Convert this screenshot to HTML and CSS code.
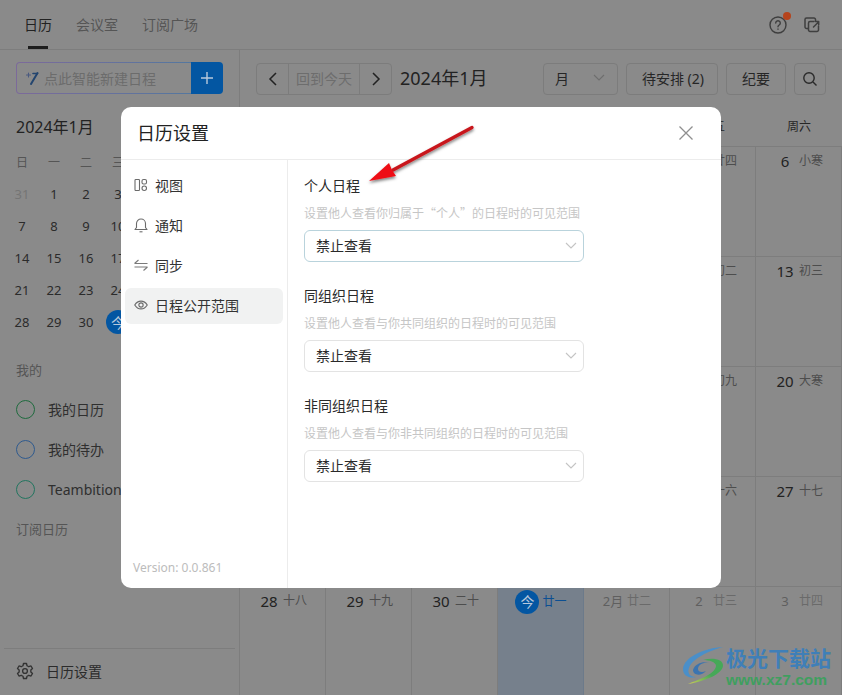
FILE: index.html
```html
<!DOCTYPE html>
<html lang="zh-CN">
<head>
  <meta charset="UTF-8" />
  <title>日历设置</title>
  <link rel="stylesheet" href="styles.css">
</head>
<body>
  <header class="topbar">
    <nav class="tabs">
      <a class="tab active">日历</a>
      <a class="tab">会议室</a>
      <a class="tab">订阅广场</a>
    </nav>
    <div class="top-icons">
      <span class="help">
        <svg width="20" height="20" viewBox="0 0 20 20" fill="none" stroke="#3f3f3f" stroke-width="1.4"><circle cx="10" cy="10" r="8"/><path d="M7.7 8a2.3 2.3 0 1 1 3.5 2c-.8.5-1.2.9-1.2 1.8" stroke-linecap="round"/><path d="M10 13.6v1.2"/></svg>
        <i class="dot"></i>
      </span>
      <svg width="18" height="18" viewBox="0 0 18 18" fill="none" stroke="#3f3f3f" stroke-width="1.5" stroke-linejoin="round" stroke-linecap="round"><path d="M5 12.500H3.500A1.500 1.500 0 0 1 2 11V3.500A1.500 1.500 0 0 1 3.500 2H11a1.500 1.500 0 0 1 1.500 1.500V5"/><path d="M11 5.500H7a1.500 1.500 0 0 0-1.500 1.500v7A1.500 1.500 0 0 0 7 15.500h7a1.500 1.500 0 0 0 1.500-1.500v-4"/><path d="M10.500 11l5-5M12.500 5.500h3.200v3.200"/></svg>
    </div>
  </header>

  <div class="app">
    <aside class="sidebar">
      <div class="quick-add">
        <div class="quick-input">
          <svg width="14" height="16" viewBox="0 0 14 16" fill="none" stroke-linecap="round"><path d="M12.5 3L6 14" stroke="#23456f" stroke-width="2"/><path d="M8 3.5h4.5" stroke="#23456f" stroke-width="1.6"/><path d="M1.5 5h4M3.5 3v4" stroke="#4a5a80" stroke-width="1.1"/></svg>
          <span>点此智能新建日程</span>
        </div>
        <button class="quick-btn">
          <svg width="12" height="12" viewBox="0 0 12 12" stroke="#b9c9dc" stroke-width="1.4"><path d="M6 0v12M0 6h12"/></svg>
        </button>
      </div>

      <h2 class="mini-title">2024年1月</h2>
      <!-- only the columns the dialog leaves uncovered -->
      <div class="mini-cal">
        <span class="wk">日</span><span class="wk">一</span><span class="wk">二</span><span class="wk">三</span>
        <span class="off">31</span><span>1</span><span>2</span><span>3</span>
        <span>7</span><span>8</span><span>9</span><span>10</span>
        <span>14</span><span>15</span><span>16</span><span>17</span>
        <span>21</span><span>22</span><span>23</span><span>24</span>
        <span>28</span><span>29</span><span>30</span><span><b class="today-dot">今</b></span>
      </div>

      <div class="group-label mine">我的</div>
      <ul class="cal-list">
        <li><i class="ring green"></i>我的日历</li>
        <li><i class="ring blue"></i>我的待办</li>
        <li><i class="ring teal"></i>Teambition</li>
      </ul>
      <div class="group-label">订阅日历</div>

      <div class="side-foot">
        <svg width="18" height="18" viewBox="0 0 24 24" fill="none" stroke="#333" stroke-width="1.8" stroke-linejoin="round"><circle cx="12" cy="12" r="3.2"/><path d="M10 2h4l.7 3 2.4 1.3 2.9-1 2 3.4-2.2 2.1v2.4l2.2 2.1-2 3.4-2.9-1-2.4 1.3-.7 3h-4l-.7-3-2.4-1.3-2.9 1-2-3.4 2.2-2.1v-2.4L2 8.700l2-3.400 2.900 1L9.300 5z"/></svg>
        <span>日历设置</span>
      </div>
    </aside>

    <main class="main">
      <div class="toolbar">
        <div class="pager">
          <button class="pager-btn">
            <svg width="10" height="14" viewBox="0 0 10 14" fill="none" stroke="#222" stroke-width="1.5"><path d="M8 1L2 7l6 6"/></svg>
          </button>
          <button class="pager-today">回到今天</button>
          <button class="pager-btn">
            <svg width="10" height="14" viewBox="0 0 10 14" fill="none" stroke="#222" stroke-width="1.5"><path d="M2 1l6 6-6 6"/></svg>
          </button>
        </div>
        <div class="month-title">2024年1月</div>
        <div class="tools">
          <div class="tool view-select">月
            <svg width="12" height="7" viewBox="0 0 12 7" fill="none" stroke="#6e6e6e" stroke-width="1.100"><path d="M1 1l5 5 5-5"/></svg>
          </div>
          <div class="tool pending">待安排 (2)</div>
          <div class="tool notes">纪要</div>
          <div class="tool search">
            <svg width="16" height="16" viewBox="0 0 16 16" fill="none" stroke="#2a2a2a" stroke-width="1.400"><circle cx="7" cy="7" r="5.200"/><path d="M11 11l3.500 3.500"/></svg>
          </div>
        </div>
      </div>

      <div class="week-head">
        <span>周日</span><span>周一</span><span>周二</span><span>周三</span><span>周四</span><span>周五</span><span>周六</span>
      </div>

      <div class="month-grid">
        <div class="cell off"><b>31</b><em>十九</em></div><div class="cell"><b>1</b><em>二十</em></div><div class="cell"><b>2</b><em>廿一</em></div><div class="cell"><b>3</b><em>廿二</em></div><div class="cell"><b>4</b><em>廿三</em></div><div class="cell"><b>5</b><em>廿四</em></div><div class="cell"><b>6</b><em>小寒</em></div>
        <div class="cell"><b>7</b><em>廿六</em></div><div class="cell"><b>8</b><em>廿七</em></div><div class="cell"><b>9</b><em>廿八</em></div><div class="cell"><b>10</b><em>廿九</em></div><div class="cell"><b>11</b><em>初一</em></div><div class="cell"><b>12</b><em>初二</em></div><div class="cell"><b>13</b><em>初三</em></div>
        <div class="cell"><b>14</b><em>初四</em></div><div class="cell"><b>15</b><em>初五</em></div><div class="cell"><b>16</b><em>初六</em></div><div class="cell"><b>17</b><em>初七</em></div><div class="cell"><b>18</b><em>初八</em></div><div class="cell"><b>19</b><em>初九</em></div><div class="cell"><b>20</b><em>大寒</em></div>
        <div class="cell"><b>21</b><em>十一</em></div><div class="cell"><b>22</b><em>十二</em></div><div class="cell"><b>23</b><em>十三</em></div><div class="cell"><b>24</b><em>十四</em></div><div class="cell"><b>25</b><em>十五</em></div><div class="cell"><b>26</b><em>十六</em></div><div class="cell"><b>27</b><em>十七</em></div>
        <div class="cell"><b>28</b><em>十八</em></div><div class="cell"><b>29</b><em>十九</em></div><div class="cell"><b>30</b><em>二十</em></div><div class="cell today"><b class="today-dot">今</b><em>廿一</em></div><div class="cell off"><b>2月</b><em>廿二</em></div><div class="cell off"><b>2</b><em>廿三</em></div><div class="cell off"><b>3</b><em>廿四</em></div>
      </div>
    </main>
  </div>

  <section class="modal">
    <div class="modal-head">
      <h1>日历设置</h1>
      <svg width="16" height="16" viewBox="0 0 16 16" stroke="#8f8f8f" stroke-width="1.300"><path d="M1.500 1.500l13 13M14.500 1.500l-13 13"/></svg>
    </div>
    <div class="modal-body">
      <div class="modal-nav">
        <a class="nav-item">
          <svg width="14" height="14" viewBox="0 0 14 14" fill="none" stroke="#6b6b6b" stroke-width="1.100"><rect x="1" y="1.500" width="4.500" height="11" rx=".8"/><rect x="8" y="1.500" width="4.500" height="4.500" rx="1.500"/><rect x="8" y="8" width="4.500" height="4.500" rx="2.200"/></svg>
          视图
        </a>
        <a class="nav-item">
          <svg width="14" height="16" viewBox="0 0 14 16" fill="none" stroke="#6b6b6b" stroke-width="1.100"><path d="M1 12.500h12l-1.500-2V6.500a4.500 4.500 0 0 0-9 0v4z" stroke-linejoin="round"/><path d="M5.500 14.800h3"/></svg>
          通知
        </a>
        <a class="nav-item">
          <svg width="14" height="14" viewBox="0 0 14 14" fill="none" stroke="#7a7a7a" stroke-width="1.100"><path d="M.5 5.500h13M.5 5.500l4-3.500M13.500 9h-13M13.500 9l-4 3.500"/></svg>
          同步
        </a>
        <a class="nav-item active">
          <svg width="14" height="14" viewBox="0 0 15 14" fill="none" stroke="#6b6b6b" stroke-width="1.200"><path d="M.8 7c1.700-2.800 4-4.200 6.700-4.200S12.500 4.200 14.200 7c-1.700 2.800-4 4.200-6.700 4.200S2.500 9.800.8 7z"/><circle cx="7.500" cy="7" r="2.300"/></svg>
          日程公开范围
        </a>
        <div class="version">Version: 0.0.861</div>
      </div>
      <div class="modal-form">
        <div class="field">
          <h3>个人日程</h3>
          <p>设置他人查看你归属于“个人”的日程时的可见范围</p>
          <div class="select focused">禁止查看
            <svg width="12" height="7" viewBox="0 0 12 7" fill="none" stroke="#c4c4c4" stroke-width="1.100"><path d="M1 1l5 5 5-5"/></svg>
          </div>
        </div>
        <div class="field">
          <h3>同组织日程</h3>
          <p>设置他人查看与你共同组织的日程时的可见范围</p>
          <div class="select">禁止查看
            <svg width="12" height="7" viewBox="0 0 12 7" fill="none" stroke="#c4c4c4" stroke-width="1.100"><path d="M1 1l5 5 5-5"/></svg>
          </div>
        </div>
        <div class="field">
          <h3>非同组织日程</h3>
          <p>设置他人查看与你非共同组织的日程时的可见范围</p>
          <div class="select">禁止查看
            <svg width="12" height="7" viewBox="0 0 12 7" fill="none" stroke="#c4c4c4" stroke-width="1.100"><path d="M1 1l5 5 5-5"/></svg>
          </div>
        </div>
      </div>
    </div>
  </section>

  <!-- annotation arrow on top of the dialog -->
  <svg class="arrow" width="120" height="70" viewBox="0 0 120 70">
    <defs>
      <filter id="arrow-shadow" x="-20%" y="-20%" width="140%" height="150%"><feDropShadow dx="0" dy="2" stdDeviation="1.500" flood-color="#000" flood-opacity=".5"/></filter>
    </defs>
    <g filter="url(#arrow-shadow)">
      <path d="M112 7.500L33 50" stroke="#c8171c" stroke-width="3.400" stroke-linecap="round"/>
      <path d="M9 61L29 43 32 50 36 56z" fill="#ee0f14"/>
    </g>
  </svg>

  <div class="watermark">
    <svg width="44" height="40" viewBox="0 0 44 40" fill="none">
      <defs>
        <linearGradient id="wm-green" x1="1" y1="0" x2="0" y2="1"><stop offset=".5" stop-color="#46a858"/><stop offset="1" stop-color="#cfcf55"/></linearGradient>
      </defs>
      <path d="M41 1C22 2 2 11 1 23c0 7 7 10 13 8-6 0-9-4-7-9C10 13 26 5 41 1z" fill="#4a8fc9"/>
      <path d="M11 24c2-7 11-9 16-7-6-1-11 2-11 6 0 3 4 4 8 2-4 5-13 5-13-1z" fill="#3b74b0"/>
      <path d="M21 14c9-3 21-1 20 6-1 8-17 15-35 18 12-5 27-10 28-18 0-4-7-6-13-6z" fill="url(#wm-green)"/>
    </svg>
    <div class="wm-text">
      <strong>极光下载站</strong>
      <span>www.xz7.com</span>
    </div>
  </div>
</body>
</html>
```

FILE: styles.css
```css
* { box-sizing: border-box; }
html, body { height: 100%; }
body { margin: 0; height: 695px; overflow: hidden; position: relative; background: #8a8a8a; color: #222; font-family: "Noto Sans", "Noto Sans CJK SC", sans-serif; font-size: 14px; }
h1, h2, h3, p, ul { margin: 0; padding: 0; font-weight: 400; }
button { font: inherit; padding: 0; background: none; border: none; }
em, i { font-style: normal; }

/* top bar */
.topbar { height: 50px; display: flex; justify-content: space-between; border-bottom: 1px solid #7d7d7d; padding: 0 21px 0 24px; }
.tabs { display: flex; gap: 24px; }
.tab { position: relative; line-height: 49px; color: #555; font-size: 14px; }
.tab.active { color: #222; }
.tab.active::after { content: ""; position: absolute; left: 4px; right: 4px; bottom: 0; height: 3px; background: #1d1d1d; }
.top-icons { display: flex; align-items: center; gap: 15px; }
.help { position: relative; display: flex; }
.dot { position: absolute; top: -3px; right: -3px; width: 8px; height: 8px; border-radius: 50%; background: #b5431c; }

.app { display: flex; height: 645px; }

/* sidebar */
.sidebar { width: 240px; border-right: 1px solid #7d7d7d; display: flex; flex-direction: column; padding-top: 12px; }
.quick-add { display: flex; height: 32px; margin: 0 16px; width: 207px; }
.quick-input { flex: 1; display: flex; align-items: center; gap: 5px; padding-left: 8px; border: 1px solid transparent; border-right: none; border-radius: 4px 0 0 4px; background: linear-gradient(#8a8a8a, #8a8a8a) padding-box, linear-gradient(90deg, #7c6a9a, #54779f) border-box; color: #6c6c6c; font-size: 14px; }
.quick-btn { width: 32px; display: flex; align-items: center; justify-content: center; background: #0356a2; border-radius: 0 4px 4px 0; }
.mini-title { margin: 22px 0 0 16px; font-size: 16px; line-height: 22px; color: #222; }
.mini-cal { display: grid; grid-template-columns: repeat(4, 32px); grid-auto-rows: 32px; margin: 8px 0 0 6px; font-size: 13px; color: #2b2b2b; }
.mini-cal span { display: flex; align-items: center; justify-content: center; }
.mini-cal .wk { color: #555; font-size: 12px; }
.mini-cal .off { color: #757575; }
.today-dot { display: flex; align-items: center; justify-content: center; width: 24px; height: 24px; border-radius: 50%; background: #0356a2; color: #b9c9dc; font-weight: 400; font-size: 14px; }
.group-label { margin-left: 16px; font-size: 13px; line-height: 20px; color: #555; }
.group-label.mine { margin-top: 22px; }
.cal-list { list-style: none; margin: 9px 0 10px 16px; }
.cal-list li { display: flex; align-items: center; gap: 13px; height: 40px; color: #2f2f2f; white-space: nowrap; }
.ring { width: 19px; height: 19px; border-radius: 50%; border: 1.500px solid; }
.ring.green { border-color: #1f6b3e; }
.ring.blue { border-color: #2f5a8e; }
.ring.teal { border-color: #22755f; }
.side-foot { margin: auto 4px 0; height: 47px; border-top: 1px solid #7d7d7d; display: flex; align-items: center; gap: 12px; padding: 0 0 2px 12px; color: #2b2b2b; }

/* toolbar + month */
.main { width: 602px; }
.toolbar { display: flex; align-items: center; height: 57px; padding: 0 16px; }
.pager { display: flex; height: 32px; width: 136px; border: 1px solid #7c7c7c; border-radius: 4px; }
.pager-btn { width: 31px; display: flex; align-items: center; justify-content: center; }
.pager-today { flex: 1; padding-bottom: 2px; border-left: 1px solid #7c7c7c; border-right: 1px solid #7c7c7c; color: #6d6d6d; font-size: 14px; white-space: nowrap; }
.month-title { margin-left: 8px; padding-bottom: 3px; font-size: 18px; color: #222; }
.tools { margin-left: auto; display: flex; gap: 8px; }
.tool { height: 32px; display: flex; align-items: center; justify-content: center; padding-bottom: 2px; border: 1px solid #7c7c7c; border-radius: 4px; font-size: 14px; color: #262626; }
.view-select { width: 75px; justify-content: space-between; padding: 0 12px 2px 11px; }
.pending { width: 92px; padding-left: 2px; }
.notes { width: 60px; }
.search { width: 32px; padding-bottom: 0; }
.week-head { display: grid; grid-template-columns: repeat(7, 86px); height: 40px; align-items: center; padding-bottom: 2px; border-bottom: 1px solid #7d7d7d; text-align: center; font-size: 12px; color: #262626; }
.month-grid { display: grid; grid-template-columns: repeat(7, 86px); grid-auto-rows: 110px; }
.cell { display: flex; justify-content: center; align-items: flex-start; gap: 3px; padding-top: 3px; border-right: 1px solid #7d7d7d; border-bottom: 1px solid #7d7d7d; line-height: 22px; }
.cell b { width: 22px; font-weight: 400; font-size: 15px; text-align: center; white-space: nowrap; color: #222; }
.cell em { font-size: 12px; color: #4d4d4d; }
.cell.off b { color: #5f5f5f; font-size: 13px; }
.cell.off em { color: #6a6a6a; }
.cell.today { background: #76808c; padding: 3px 0 0 1px; border-right-color: #6c7a8a; }
.cell.today .today-dot { width: 24px; height: 24px; font-size: 14px; color: #b9c9dc; }
.cell.today em { color: #0c4f92; margin-top: 1px; }

/* dialog */
.modal { position: absolute; left: 121px; top: 107px; width: 600px; height: 481px; background: #fff; border-radius: 10px; display: flex; flex-direction: column; }
.modal-head { height: 53px; display: flex; align-items: center; justify-content: space-between; padding: 0 27px 0 16px; border-bottom: 1px solid #ececec; }
.modal-head h1 { font-size: 18px; line-height: 24px; color: #222; }
.modal-body { flex: 1; display: flex; }
.modal-nav { width: 167px; border-right: 1px solid #ececec; padding: 8px 4px 0; display: flex; flex-direction: column; }
.nav-item { display: flex; align-items: center; gap: 7px; height: 36px; margin-bottom: 4px; padding: 0 0 2px 9px; border-radius: 6px; color: #333; }
.nav-item.active { background: #f1f2f2; }
.version { margin: auto 0 12px 8px; font-size: 12px; color: #bcbcbc; }
.modal-form { flex: 1; padding: 15px 0 0 16px; }
.field { width: 280px; height: 110px; }
.field h3 { font-size: 14px; line-height: 22px; color: #2a2a2a; }
.field p { margin-top: 7px; font-family: "Noto Sans CJK SC", sans-serif; font-size: 12px; line-height: 18px; color: #c6c6c6; white-space: nowrap; }
.select { margin-top: 8px; height: 32px; display: flex; align-items: center; justify-content: space-between; padding: 0 6px 2px 11px; border: 1px solid #e3e3e3; border-radius: 6px; color: #2a2a2a; }
.select.focused { border-color: #b9d3dc; }

/* annotation + watermark */
.arrow { position: absolute; left: 360px; top: 120px; }
.watermark { position: absolute; left: 682px; top: 646px; display: flex; align-items: flex-start; }
.wm-text { display: flex; flex-direction: column; }
.wm-text strong { font-size: 21px; line-height: 24px; color: #3f7fb8; white-space: nowrap; }
.wm-text span { font-family: "Liberation Sans", sans-serif; font-weight: 700; font-size: 15.500px; line-height: 20px; color: #3f9f5f; }
```
